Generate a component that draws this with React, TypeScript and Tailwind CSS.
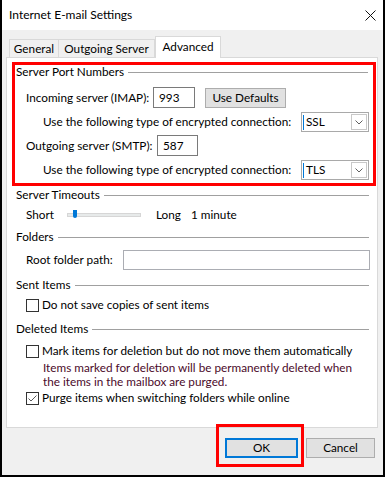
import type { ReactNode } from "react";

const Header = ({ title, className = "" }: { title: string; className?: string }) => (
  <div className={`flex h-[14px] items-center gap-[4px] ${className}`}>
    <span className="whitespace-nowrap leading-[14px]">{title}</span>
    <div className="h-px flex-1 bg-[#a0a0a0]" />
  </div>
);

const Check = ({ checked = false, children }: { checked?: boolean; children: ReactNode }) => (
  <div className="flex h-[14px] items-center gap-[3px]">
    <div className="flex h-[13px] w-[13px] shrink-0 items-center justify-center border border-[#333333] bg-white">
      {checked && (
        <svg width="11" height="11" viewBox="0 0 11 11">
          <path d="M1.5 5.5 L4 8 L9.5 2.5" fill="none" stroke="#5a5a5a" strokeWidth="1" />
        </svg>
      )}
    </div>
    <span className="whitespace-nowrap leading-[14px]">{children}</span>
  </div>
);

const Combo = ({ value }: { value: string }) => (
  <div className="ml-auto mr-[4px] flex h-[20px] w-[68px] shrink-0 items-center border border-[#a9a9a9] bg-white">
    <div className="ml-px h-[15px] w-px bg-[#0078d7]" />
    <span className="ml-[2px] flex-1 leading-[14px]">{value}</span>
    <div className="mr-px flex h-[16px] w-[16px] items-center justify-center border border-[#c8c8c8]">
      <svg width="8" height="5" viewBox="0 0 8 5">
        <path d="M0.5 0.5 L4 4 L7.5 0.5" fill="none" stroke="#606060" strokeWidth="1" />
      </svg>
    </div>
  </div>
);

export default function App() {
  return (
    <div className="h-[477px] w-[385px] bg-black px-[2px] pb-[2px] font-['Lato',sans-serif] text-[11.75px] text-black">
      <div className="flex h-full flex-col bg-[#f0f0f0]">
        {/* title bar */}
        <div className="flex h-[30px] items-center justify-between bg-white pl-[7px] pr-[7px]">
          <span className="whitespace-nowrap text-[12px] leading-[14px]">Internet E-mail Settings</span>
          <svg width="11" height="11" viewBox="0 0 11 11">
            <path d="M0.5 0.5 L10.5 10.5 M10.5 0.5 L0.5 10.5" stroke="#111" strokeWidth="1" />
          </svg>
        </div>

        <div className="flex flex-1 flex-col pl-[4px] pr-[5px] pt-[6px]">
          {/* tabs */}
          <div className="flex h-[21px] items-end pl-[3px]">
            <div className="flex h-[18px] w-[50px] items-center justify-center whitespace-nowrap border border-b-0 border-[#d9d9d9] leading-[14px]">
              General
            </div>
            <div className="flex h-[18px] w-[96px] items-center justify-center whitespace-nowrap border border-b-0 border-l-0 border-[#d9d9d9] leading-[14px]">
              Outgoing Server
            </div>
            <div className="relative z-10 -mb-px flex h-[22px] w-[66px] items-start justify-center whitespace-nowrap border border-b-0 border-[#d9d9d9] bg-white pt-[3px] leading-[14px]">
              Advanced
            </div>
          </div>

          {/* panel */}
          <div className="flex h-[371px] flex-col border border-[#d9d9d9] bg-white">
            <div className="ml-[5px] mr-px mt-[4px] flex flex-col border-[3px] border-[#ff0000]">
              <Header title="Server Port Numbers" className="pl-px pr-[5px]" />
              <div className="mt-[8px] flex h-[21px] items-center pl-[11px]">
                <span className="w-[127px] whitespace-nowrap leading-[14px]">Incoming server (IMAP):</span>
                <div className="flex h-[21px] w-[42px] items-center border border-[#7a7a7a] pl-[5px]">993</div>
                <div className="ml-[10px] flex h-[20px] w-[81px] items-center justify-center whitespace-nowrap border border-[#adadad] bg-[#e1e1e1]">
                  Use Defaults
                </div>
              </div>
              <div className="mt-[4px] flex h-[20px] items-center pl-[28px]">
                <span className="whitespace-nowrap leading-[14px]">Use the following type of encrypted connection:</span>
                <Combo value="SSL" />
              </div>
              <div className="mt-[3px] flex h-[21px] items-center pl-[11px]">
                <span className="w-[131px] whitespace-nowrap leading-[14px]">Outgoing server (SMTP):</span>
                <div className="flex h-[21px] w-[41px] items-center border border-[#7a7a7a] pl-[5px]">587</div>
              </div>
              <div className="mb-[3px] mt-[4px] flex h-[20px] items-center pl-[28px]">
                <span className="whitespace-nowrap leading-[14px]">Use the following type of encrypted connection:</span>
                <Combo value="TLS" />
              </div>
            </div>

            <div className="flex flex-col pl-[9px] pr-[7px]">
              <Header title="Server Timeouts" className="mt-[2px] pr-[1px]" />
              <div className="mt-[3px] flex h-[20px] items-center pl-[10px]">
                <span className="w-[41px] leading-[14px]">Short</span>
                <div className="relative h-[4px] w-[74px] border border-[#d6d6d6] bg-[#e7eaea]">
                  <div className="absolute left-[5px] top-[-4px] h-[8px] w-[4px] rounded-b-[2px] bg-[#0078d7]" />
                </div>
                <span className="ml-[15px] w-[35px] leading-[14px]">Long</span>
                <span className="whitespace-nowrap leading-[14px]">1 minute</span>
              </div>

              <Header title="Folders" className="mt-[5px] pr-[1px]" />
              <div className="mt-[6px] flex h-[20px] items-center pl-[10px]">
                <span className="w-[97px] whitespace-nowrap leading-[14px]">Root folder path:</span>
                <div className="h-[20px] flex-1 border border-[#abadb3]" />
              </div>

              <Header title="Sent Items" className="mt-[8px] pr-[1px]" />
              <div className="mt-[6px] pl-[10px]">
                <Check>Do not save copies of sent items</Check>
              </div>

              <Header title="Deleted Items" className="mt-[10px] pr-[1px]" />
              <div className="mt-[8px] pl-[10px]">
                <Check>Mark items for deletion but do not move them automatically</Check>
              </div>
              <div className="mt-[3px] whitespace-nowrap pl-[27px] leading-[14px] text-[#4b0a2a]">
                Items marked for deletion will be permanently deleted when
                <br />
                the items in the mailbox are purged.
              </div>
              <div className="mt-[2px] pl-[10px]">
                <Check checked>Purge items when switching folders while online</Check>
              </div>
            </div>
          </div>

          {/* buttons */}
          <div className="mt-[10px] flex justify-end gap-[8px] pr-[3px]">
            <div className="relative flex h-[20px] w-[73px] items-center justify-center border-2 border-[#0078d7] bg-[#e1e1e1]">
              OK
              <div className="absolute -bottom-[11px] -left-[11px] -right-[8px] -top-[16px] border-[3px] border-[#ff0000]" />
            </div>
            <div className="flex h-[20px] w-[69px] items-center justify-center border border-[#adadad] bg-[#e1e1e1]">
              Cancel
            </div>
          </div>
        </div>
      </div>
    </div>
  );
}
